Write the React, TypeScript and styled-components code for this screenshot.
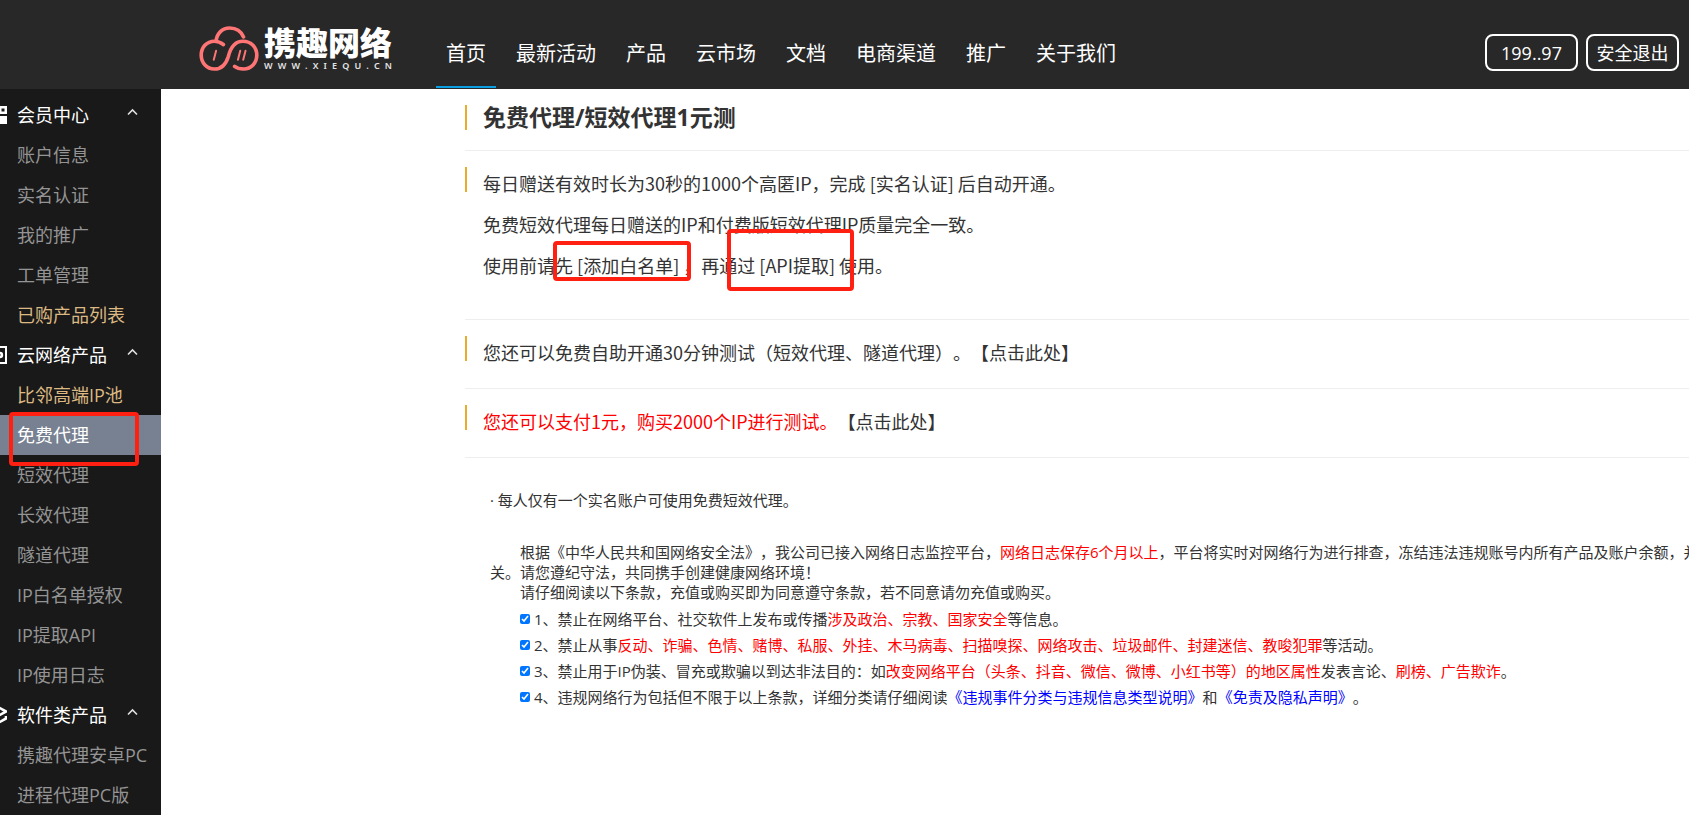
import React from "react";
import styled, { createGlobalStyle } from "styled-components";

const GlobalStyle = createGlobalStyle`
  *, *::before, *::after { box-sizing: border-box; }
  body {
    margin: 0;
    background: #fff;
    color: #333;
    font-family: "Open Sans", "Noto Sans CJK SC", sans-serif;
    font-size: 18px;
    text-spacing-trim: space-all;
    overflow-x: hidden;
  }
  a { color: inherit; text-decoration: none; }
  ul, p, h1, h2 { margin: 0; padding: 0; }
  ul { list-style: none; }
`;

const Header = styled.header`
  display: flex;
  align-items: center;
  height: 89px;
  padding: 0 10px 0 199px;
  background: #282828;
  color: #fff;
`;

const Logo = styled.a`
  display: flex;
  align-items: center;
  gap: 5px;
  padding-top: 8px;
`;

const LogoText = styled.span`
  display: flex;
  flex-direction: column;
  gap: 4px;
  width: 128px;
`;

const LogoName = styled.span`
  font-family: "Noto Sans CJK SC", sans-serif;
  font-size: 32px;
  font-weight: 900;
  line-height: 30px;
`;

const LogoSite = styled.span`
  display: flex;
  justify-content: space-between;
  font-family: "Noto Sans", sans-serif;
  font-size: 9px;
  font-weight: 600;
  line-height: 12px;
  color: #e4e4e4;
`;

const Nav = styled.nav`
  display: flex;
  flex: 1;
  gap: 10px;
  height: 89px;
  padding-left: 44px;
`;

const NavLink = styled.a<{ $active?: boolean }>`
  height: 88px;
  padding: 18px 10px 0;
  border-bottom: 2px solid ${(p) => (p.$active ? "#0a9fe0" : "transparent")};
  font-size: 20px;
  line-height: 72px;
  white-space: nowrap;
`;

const HeaderActions = styled.div`
  display: flex;
  gap: 8px;
  padding-top: 16px;
`;

const OutlineButton = styled.button`
  min-width: 93px;
  height: 37px;
  padding: 0 8px;
  border: 2px solid #fff;
  border-radius: 8px;
  background: none;
  color: #fff;
  font: inherit;
  line-height: 32px;
  white-space: nowrap;
`;

const Body = styled.div`
  display: flex;
`;

const Sidebar = styled.aside`
  position: relative;
  flex: 0 0 161px;
  padding-top: 6px;
  background: #191919;
`;

const MenuHeading = styled.h2`
  display: flex;
  align-items: center;
  height: 40px;
  padding-right: 23px;
  color: #fff;
  font-size: 18px;
  font-weight: 400;
  line-height: 40px;
  white-space: nowrap;
`;

const HeadingLabel = styled.span`
  flex: 1;
`;

const HeadingIcon = styled.svg`
  flex: none;
  margin-left: -11px;
  margin-right: 10px;
`;

type Tone = "plain" | "gold" | "active";

const tones: Record<Tone, string> = {
  plain: "#949494",
  gold: "#dcb882",
  active: "#fff",
};

const MenuLink = styled.a<{ $tone: Tone }>`
  display: block;
  height: 40px;
  padding-left: 17px;
  background: ${(p) => (p.$tone === "active" ? "#788191" : "transparent")};
  color: ${(p) => tones[p.$tone]};
  line-height: 40px;
  white-space: nowrap;
`;

const Marker = styled.span<{ $x: number; $y: number; $w: number; $h: number }>`
  position: absolute;
  left: ${(p) => p.$x}px;
  top: ${(p) => p.$y}px;
  width: ${(p) => p.$w}px;
  height: ${(p) => p.$h}px;
  border: 4px solid #ff2012;
  border-radius: 4px;
  pointer-events: none;
`;

const Content = styled.main`
  flex: 1;
  min-width: 0;
  padding-left: 304px;
  overflow: hidden;
`;

const TitleRow = styled.div`
  padding: 16px 0 20px;
  border-bottom: 1px solid #eee;
`;

const Title = styled.h1`
  padding-left: 16px;
  border-left: 2px solid #eaac2c;
  font-family: "Open Sans", "Noto Sans CJK SC", sans-serif;
  font-size: 23px;
  font-weight: 700;
  line-height: 25px;
`;

const Section = styled.section<{ $tall?: boolean }>`
  position: relative;
  display: flex;
  gap: 16px;
  padding: 12px 0 ${(p) => (p.$tall ? 33 : 15)}px;
  border-bottom: 1px solid #eee;

  &::before {
    content: "";
    width: 2px;
    height: 25px;
    margin-top: 4px;
    background: #eaac2c;
  }
`;

const Line = styled.p`
  font-family: "Noto Sans CJK SC", sans-serif;
  font-size: 18px;
  line-height: 41px;
  white-space: nowrap;
`;

const Red = styled.span`
  color: #f00;
`;

const Blue = styled.a`
  && { color: #00f; }
`;

const Notice = styled.section`
  width: 1315px;
  padding: 32px 0 32px 25px;
  font-size: 15px;
  line-height: 20px;
`;

const Terms = styled.div`
  padding-top: 32px;
`;

const Paragraph = styled.p`
  text-indent: 30px;
`;

const TermList = styled.ul`
  padding: 4px 0 0 30px;
`;

const Term = styled.label`
  display: flex;
  align-items: center;
  gap: 4px;
  height: 26px;
`;

const Check = styled.input`
  width: 10px;
  height: 10px;
  margin: 0;
  accent-color: #0075ff;
`;

const CloudMark = () => (
  <svg width="60" height="45" viewBox="0 0 180 136" fill="none" stroke="#ff7575" strokeWidth="11" strokeLinecap="round" aria-hidden="true">
    <path d="M51 46C53 22 70 6 92 6C112 6 127 17 134 33" />
    <path d="M73 56C63 48 54 46 46 46C22 46 6 65 6 88C6 112 23 130 46 130C70 130 82 112 88 92C94 68 106 46 132 46C157 46 174 64 174 88C174 112 157 130 134 130C122 130 113 127 107 122" />
    <path d="M51 75L44 102M124 75L117 102M140 75L133 102" strokeWidth="6" />
  </svg>
);

const ChevronIcon = styled.svg`
  margin-bottom: 7px;
`;

const Chevron = () => (
  <ChevronIcon width="11" height="8" viewBox="0 0 11 8" fill="none" stroke="#e0e0e0" strokeWidth="1.6" aria-hidden="true">
    <path d="M1 6.5L5.5 2L10 6.5" />
  </ChevronIcon>
);

const icons: Record<string, React.ReactNode> = {
  member: (
    <>
      <path fill="#fff" fillRule="evenodd" d="M0 0H18V8H0ZM12.500 2.500V5.500H15.500V2.500Z" />
      <path fill="#fff" d="M0 10H18V18H0Z" />
    </>
  ),
  cloud: (
    <>
      <rect x="1" y="1" width="16" height="16" fill="none" stroke="#fff" strokeWidth="2" />
      <circle cx="11" cy="9" r="2" fill="none" stroke="#fff" strokeWidth="2.400" />
    </>
  ),
  software: (
    <g fill="none" stroke="#fff" strokeWidth="2.600">
      <path d="M9 1L17 5.500L9 10L1 5.500Z" />
      <path d="M1 12.500L9 17L17 12.500V10" />
    </g>
  ),
};

const menu: { icon: string; title: string; items: [string, Tone][] }[] = [
  {
    icon: "member",
    title: "会员中心",
    items: [
      ["账户信息", "plain"],
      ["实名认证", "plain"],
      ["我的推广", "plain"],
      ["工单管理", "plain"],
      ["已购产品列表", "gold"],
    ],
  },
  {
    icon: "cloud",
    title: "云网络产品",
    items: [
      ["比邻高端IP池", "gold"],
      ["免费代理", "active"],
      ["短效代理", "plain"],
      ["长效代理", "plain"],
      ["隧道代理", "plain"],
      ["IP白名单授权", "plain"],
      ["IP提取API", "plain"],
      ["IP使用日志", "plain"],
    ],
  },
  {
    icon: "software",
    title: "软件类产品",
    items: [
      ["携趣代理安卓PC", "plain"],
      ["进程代理PC版", "plain"],
    ],
  },
];

const navItems = ["首页", "最新活动", "产品", "云市场", "文档", "电商渠道", "推广", "关于我们"];

const terms: React.ReactNode[] = [
  <>1、禁止在网络平台、社交软件上发布或传播<Red>涉及政治、宗教、国家安全</Red>等信息。</>,
  <>2、禁止从事<Red>反动、诈骗、色情、赌博、私服、外挂、木马病毒、扫描嗅探、网络攻击、垃圾邮件、封建迷信、教唆犯罪</Red>等活动。</>,
  <>3、禁止用于IP伪装、冒充或欺骗以到达非法目的：如<Red>改变网络平台（头条、抖音、微信、微博、小红书等）的地区属性</Red>发表言论、<Red>刷榜、广告欺诈</Red>。</>,
  <>4、违规网络行为包括但不限于以上条款，详细分类请仔细阅读<Blue href="#types">《违规事件分类与违规信息类型说明》</Blue>和<Blue href="#privacy">《免责及隐私声明》</Blue>。</>,
];

export default function App() {
  return (
    <>
      <GlobalStyle />
      <Header>
        <Logo href="#home">
          <CloudMark />
          <LogoText>
            <LogoName>携趣网络</LogoName>
            <LogoSite>
              {"WWW.XIEQU.CN".split("").map((c, i) => (
                <span key={i}>{c}</span>
              ))}
            </LogoSite>
          </LogoText>
        </Logo>
        <Nav>
          {navItems.map((item, i) => (
            <NavLink key={item} href="#nav" $active={i === 0}>
              {item}
            </NavLink>
          ))}
        </Nav>
        <HeaderActions>
          <OutlineButton type="button">199..97</OutlineButton>
          <OutlineButton type="button">安全退出</OutlineButton>
        </HeaderActions>
      </Header>
      <Body>
        <Sidebar>
          {menu.map((group) => (
            <nav key={group.title} aria-label={group.title}>
              <MenuHeading>
                <HeadingIcon width="18" height="18" viewBox="0 0 18 18" aria-hidden="true">
                  {icons[group.icon]}
                </HeadingIcon>
                <HeadingLabel>{group.title}</HeadingLabel>
                <Chevron />
              </MenuHeading>
              <ul>
                {group.items.map(([label, tone]) => (
                  <li key={label}>
                    <MenuLink href="#menu" $tone={tone}>
                      {label}
                    </MenuLink>
                  </li>
                ))}
              </ul>
            </nav>
          ))}
          <Marker $x={9} $y={323} $w={130} $h={54} />
        </Sidebar>
        <Content>
          <TitleRow>
            <Title>免费代理/短效代理1元测</Title>
          </TitleRow>
          <Section $tall>
            <div>
              <Line>
                每日赠送有效时长为30秒的1000个高匿IP，完成 <a href="#verify">[实名认证]</a> 后自动开通。
              </Line>
              <Line>免费短效代理每日赠送的IP和付费版短效代理IP质量完全一致。</Line>
              <Line>
                使用前请先 <a href="#whitelist">[添加白名单]</a> ，再通过 <a href="#api">[API提取]</a> 使用。
              </Line>
            </div>
            <Marker $x={88} $y={90} $w={138} $h={40} />
            <Marker $x={262} $y={78} $w={127} $h={62} />
          </Section>
          <Section>
            <Line>
              您还可以免费自助开通30分钟测试（短效代理、隧道代理）。<a href="#trial">【点击此处】</a>
            </Line>
          </Section>
          <Section>
            <Line>
              <Red>您还可以支付1元，购买2000个IP进行测试。</Red>
              <a href="#buy">【点击此处】</a>
            </Line>
          </Section>
          <Notice>
            <p>· 每人仅有一个实名账户可使用免费短效代理。</p>
            <Terms>
              <Paragraph>
                根据《中华人民共和国网络安全法》，我公司已接入网络日志监控平台，<Red>网络日志保存6个月以上</Red>，平台将实时对网络行为进行排查，冻结违法违规账号内所有产品及账户余额，并移交公安机关。请您遵纪守法，共同携手创建健康网络环境！
              </Paragraph>
              <Paragraph>请仔细阅读以下条款，充值或购买即为同意遵守条款，若不同意请勿充值或购买。</Paragraph>
              <TermList>
                {terms.map((term, i) => (
                  <li key={i}>
                    <Term>
                      <Check type="checkbox" defaultChecked />
                      <span>{term}</span>
                    </Term>
                  </li>
                ))}
              </TermList>
            </Terms>
          </Notice>
        </Content>
      </Body>
    </>
  );
}
